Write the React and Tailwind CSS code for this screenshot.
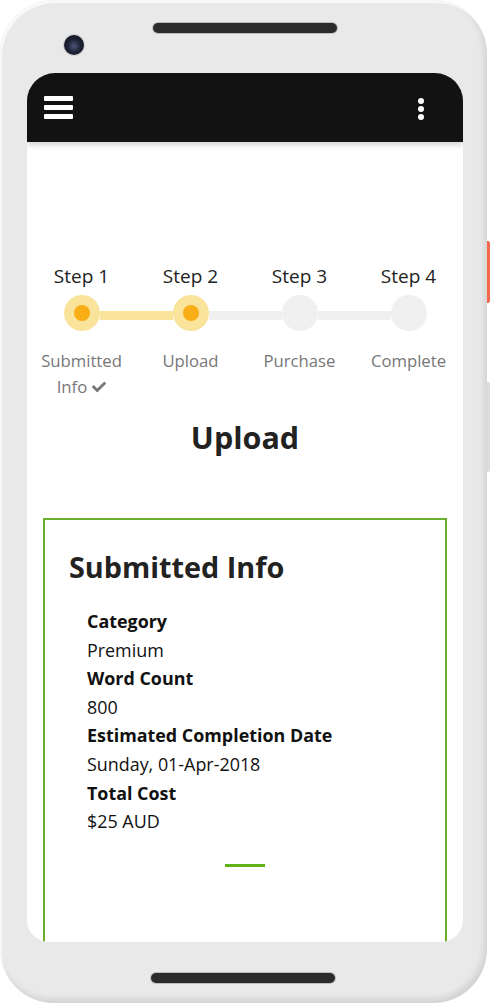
import React from "react";
import { FaCheck } from "react-icons/fa";

const steps = [
  { title: "Step 1", label: ["Submitted", "Info"], done: true, active: true },
  { title: "Step 2", label: ["Upload"], active: true },
  { title: "Step 3", label: ["Purchase"] },
  { title: "Step 4", label: ["Complete"] },
];

const info = [
  ["Category", "Premium"],
  ["Word Count", "800"],
  ["Estimated Completion Date", "Sunday, 01-Apr-2018"],
  ["Total Cost", "$25 AUD"],
];

const Speaker = ({ className }) => (
  <div
    className={`h-[10px] w-[184px] rounded-full bg-[#2b2b2b] shadow-[0_0_0_1px_#bdbdbd] ${className}`}
  />
);

const Stepper = () => (
  <div className="grid grid-cols-4">
    {steps.map((s, i) => {
      const leftColor =
        i === 0 ? "bg-transparent" : s.active ? "bg-[#fae39b]" : "bg-[#f0f0f0]";
      const rightColor =
        i === steps.length - 1
          ? "bg-transparent"
          : steps[i + 1].active
          ? "bg-[#fae39b]"
          : "bg-[#f0f0f0]";
      return (
        <div key={s.title} className="flex flex-col items-center">
          <span className="text-[19px] leading-[26px] text-[#222]">{s.title}</span>
          <div className="mt-[6px] flex w-full items-center">
            <div className={`mt-[5px] h-[9px] flex-1 ${leftColor}`} />
            <div
              className={`flex h-[36px] w-[36px] shrink-0 items-center justify-center rounded-full ${
                s.active ? "bg-[#fae39b]" : "bg-[#f0f0f0]"
              }`}
            >
              {s.active && <div className="h-[16px] w-[16px] rounded-full bg-[#f9ad16]" />}
            </div>
            <div className={`mt-[5px] h-[9px] flex-1 ${rightColor}`} />
          </div>
          <div className="mt-[17px] flex flex-col items-center text-[16.7px] leading-[26px] text-[#777]">
            {s.label.map((l, j) => (
              <span key={l} className="flex items-center gap-[5px]">
                {l}
                {s.done && j === s.label.length - 1 && (
                  <FaCheck className="h-[14px] w-[14px] text-[#777]" />
                )}
              </span>
            ))}
          </div>
        </div>
      );
    })}
  </div>
);

export default function App() {
  return (
    <div
      className="flex w-[491px] bg-white"
      style={{ fontFamily: '"Open Sans", "Noto Sans", sans-serif' }}
    >
      <div className="flex h-[1003px] w-[487px] flex-col rounded-[54px] bg-[#e9e9e9] shadow-[inset_-3px_-4px_6px_rgba(0,0,0,0.10),inset_2px_3px_0_rgba(255,255,255,0.7)]">
        {/* top bezel */}
        <div className="flex h-[73px] flex-col">
          <Speaker className="ml-[153px] mt-[23px]" />
          <div className="ml-[64px] mt-[2px] h-[20px] w-[20px] rounded-full bg-[radial-gradient(circle_at_50%_55%,#4a5578_0%,#1c2134_45%,#0d0f18_100%)] shadow-[0_0_0_1px_#cfcfcf]" />
        </div>

        {/* screen */}
        <div className="mx-[27px] flex h-[869px] w-[436px] flex-col overflow-hidden rounded-b-[22px] rounded-t-[28px] bg-white">
          <div className="relative z-10 flex h-[69px] shrink-0 items-start justify-between bg-[#121212] shadow-[0_3px_6px_rgba(0,0,0,0.18)]">
            <div className="ml-[17px] mt-[23px] flex flex-col gap-[4px]">
              <div className="h-[5px] w-[29px] rounded-[1px] bg-white" />
              <div className="h-[5px] w-[29px] rounded-[1px] bg-white" />
              <div className="h-[5px] w-[29px] rounded-[1px] bg-white" />
            </div>
            <div className="mr-[39px] mt-[25px] flex flex-col gap-[2px]">
              <div className="h-[6px] w-[6px] rounded-full bg-white" />
              <div className="h-[6px] w-[6px] rounded-full bg-white" />
              <div className="h-[6px] w-[6px] rounded-full bg-white" />
            </div>
          </div>

          <div className="flex flex-col pt-[121px]">
            <Stepper />
            <h1 className="mt-[17px] text-center text-[30.5px] font-bold leading-[40px] text-[#222]">
              Upload
            </h1>

            <div className="mx-[16px] mt-[61px] h-[500px] border-2 border-[#6ab02d] px-[24px] pt-[28px]">
              <h2 className="text-[28.8px] font-bold leading-[38px] text-[#222]">Submitted Info</h2>
              <dl className="mt-[21px] pl-[18px] text-[17.9px] leading-[28.6px] text-[#111]">
                {info.map(([k, v]) => (
                  <React.Fragment key={k}>
                    <dt className="font-bold">{k}</dt>
                    <dd>{v}</dd>
                  </React.Fragment>
                ))}
              </dl>
              <div className="mx-auto mt-[28px] h-[3px] w-[40px] bg-[#5fb218]" />
            </div>
          </div>
        </div>

        {/* bottom bezel */}
        <Speaker className="ml-[151px] mt-[31px]" />
      </div>

      {/* side buttons */}
      <div className="flex w-[4px] flex-col">
        <div className="mt-[241px] h-[62px] w-[3px] rounded-r-[2px] bg-[#f4694b]" />
        <div className="mt-[79px] h-[90px] w-[3px] rounded-r-[2px] bg-[#dcdcdc]" />
      </div>
    </div>
  );
}
